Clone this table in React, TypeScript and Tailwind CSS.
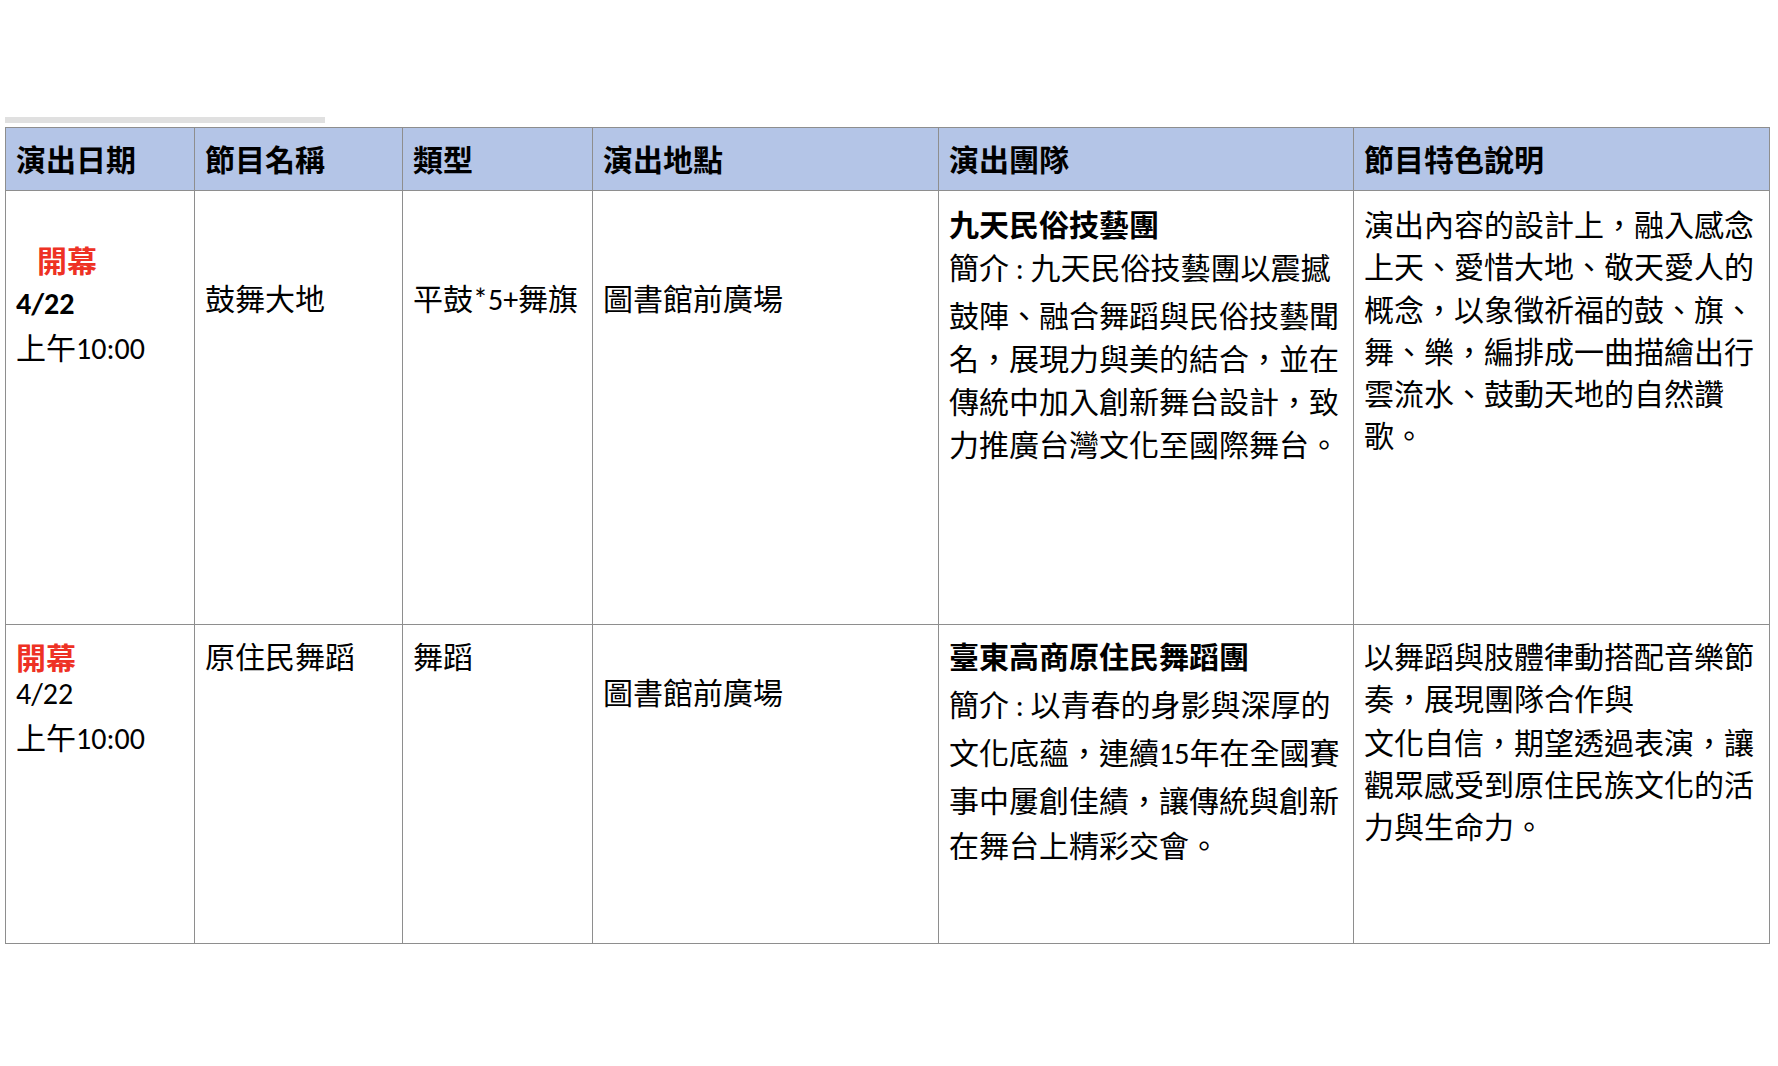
import React from "react";

const cell = "border border-[#8e8e8e] align-top px-[10px]";

function Lines({ lines, lh, className = "" }: { lines: string[]; lh: string; className?: string }) {
  return (
    <div className={className}>
      {lines.map((l, i) => (
        <div key={i} className={`whitespace-nowrap ${lh}`}>
          {l}
        </div>
      ))}
    </div>
  );
}

export default function App() {
  return (
    <div className="min-h-[1066px] bg-white pt-[117px] font-[Carlito,Lato,'Noto_Sans_CJK_TC',sans-serif] text-[30px] text-black">
      {/* scroll hint bar */}
      <div className="ml-[5px] h-[6px] w-[320px] bg-[#e0e0e0]" />

      <table className="ml-[5px] mt-[4px] table-fixed border-collapse">
        <colgroup>
          <col className="w-[189px]" />
          <col className="w-[208px]" />
          <col className="w-[190px]" />
          <col className="w-[346px]" />
          <col className="w-[415px]" />
          <col className="w-[416px]" />
        </colgroup>
        <thead>
          <tr className="h-[63px] bg-[#b4c5e7] font-bold">
            {["演出日期", "節目名稱", "類型", "演出地點", "演出團隊", "節目特色說明"].map((h) => (
              <th key={h} className="border border-[#8e8e8e] px-[10px] pt-[4px] text-left align-middle leading-[42px]">
                {h}
              </th>
            ))}
          </tr>
        </thead>
        <tbody>
          {/* row 1 */}
          <tr className="h-[434px]">
            <td className={`${cell} pt-[50px]`}>
              <div className="pl-[21px] font-bold leading-[42px] text-[#ee3124]">開幕</div>
              <div className="font-bold leading-[42px]">4/22</div>
              <div className="whitespace-nowrap leading-[48px]">上午10:00</div>
            </td>
            <td className={`${cell} pt-[88px]`}>
              <div className="whitespace-nowrap leading-[42px]">鼓舞大地</div>
            </td>
            <td className={`${cell} pt-[88px]`}>
              <div className="whitespace-nowrap leading-[42px]">平鼓*5+舞旗</div>
            </td>
            <td className={`${cell} pt-[88px]`}>
              <div className="whitespace-nowrap leading-[42px]">圖書館前廣場</div>
            </td>
            <td className={`${cell} pt-[13px]`}>
              <div className="whitespace-nowrap font-bold leading-[43px]">九天民俗技藝團</div>
              <Lines lh="leading-[43px]" lines={["簡介 : 九天民俗技藝團以震撼"]} />
              <Lines
                lh="leading-[43px]"
                className="mt-[5px]"
                lines={[
                  "鼓陣、融合舞蹈與民俗技藝聞",
                  "名，展現力與美的結合，並在",
                  "傳統中加入創新舞台設計，致",
                  "力推廣台灣文化至國際舞台。",
                ]}
              />
            </td>
            <td className={`${cell} pt-[14px]`}>
              <Lines
                lh="leading-[42.3px]"
                lines={[
                  "演出內容的設計上，融入感念",
                  "上天、愛惜大地、敬天愛人的",
                  "概念，以象徵祈福的鼓、旗、",
                  "舞、樂，編排成一曲描繪出行",
                  "雲流水、鼓動天地的自然讚",
                  "歌。",
                ]}
              />
            </td>
          </tr>

          {/* row 2 */}
          <tr className="h-[319px]">
            <td className={`${cell} pt-[16px]`}>
              <div className="font-bold leading-[35px] text-[#ee3124]">開幕</div>
              <div className="leading-[35px]">4/22</div>
              <div className="whitespace-nowrap leading-[55px]">上午10:00</div>
            </td>
            <td className={`${cell} pt-[12px]`}>
              <div className="whitespace-nowrap leading-[42px]">原住民舞蹈</div>
            </td>
            <td className={`${cell} pt-[12px]`}>
              <div className="whitespace-nowrap leading-[42px]">舞蹈</div>
            </td>
            <td className={`${cell} pt-[48px]`}>
              <div className="whitespace-nowrap leading-[42px]">圖書館前廣場</div>
            </td>
            <td className={`${cell} pt-[9px]`}>
              <div className="whitespace-nowrap font-bold leading-[48px]">臺東高商原住民舞蹈團</div>
              <Lines
                lh="leading-[48px]"
                lines={[
                  "簡介 : 以青春的身影與深厚的",
                  "文化底蘊，連續15年在全國賽",
                  "事中屢創佳績，讓傳統與創新",
                ]}
              />
              <div className="whitespace-nowrap leading-[42px]">在舞台上精彩交會。</div>
            </td>
            <td className={`${cell} pt-[12px]`}>
              <Lines
                lh="leading-[42px]"
                lines={["以舞蹈與肢體律動搭配音樂節", "奏，展現團隊合作與"]}
              />
              <Lines
                lh="leading-[42px]"
                className="mt-[2px]"
                lines={["文化自信，期望透過表演，讓", "觀眾感受到原住民族文化的活", "力與生命力。"]}
              />
            </td>
          </tr>
        </tbody>
      </table>
    </div>
  );
}
